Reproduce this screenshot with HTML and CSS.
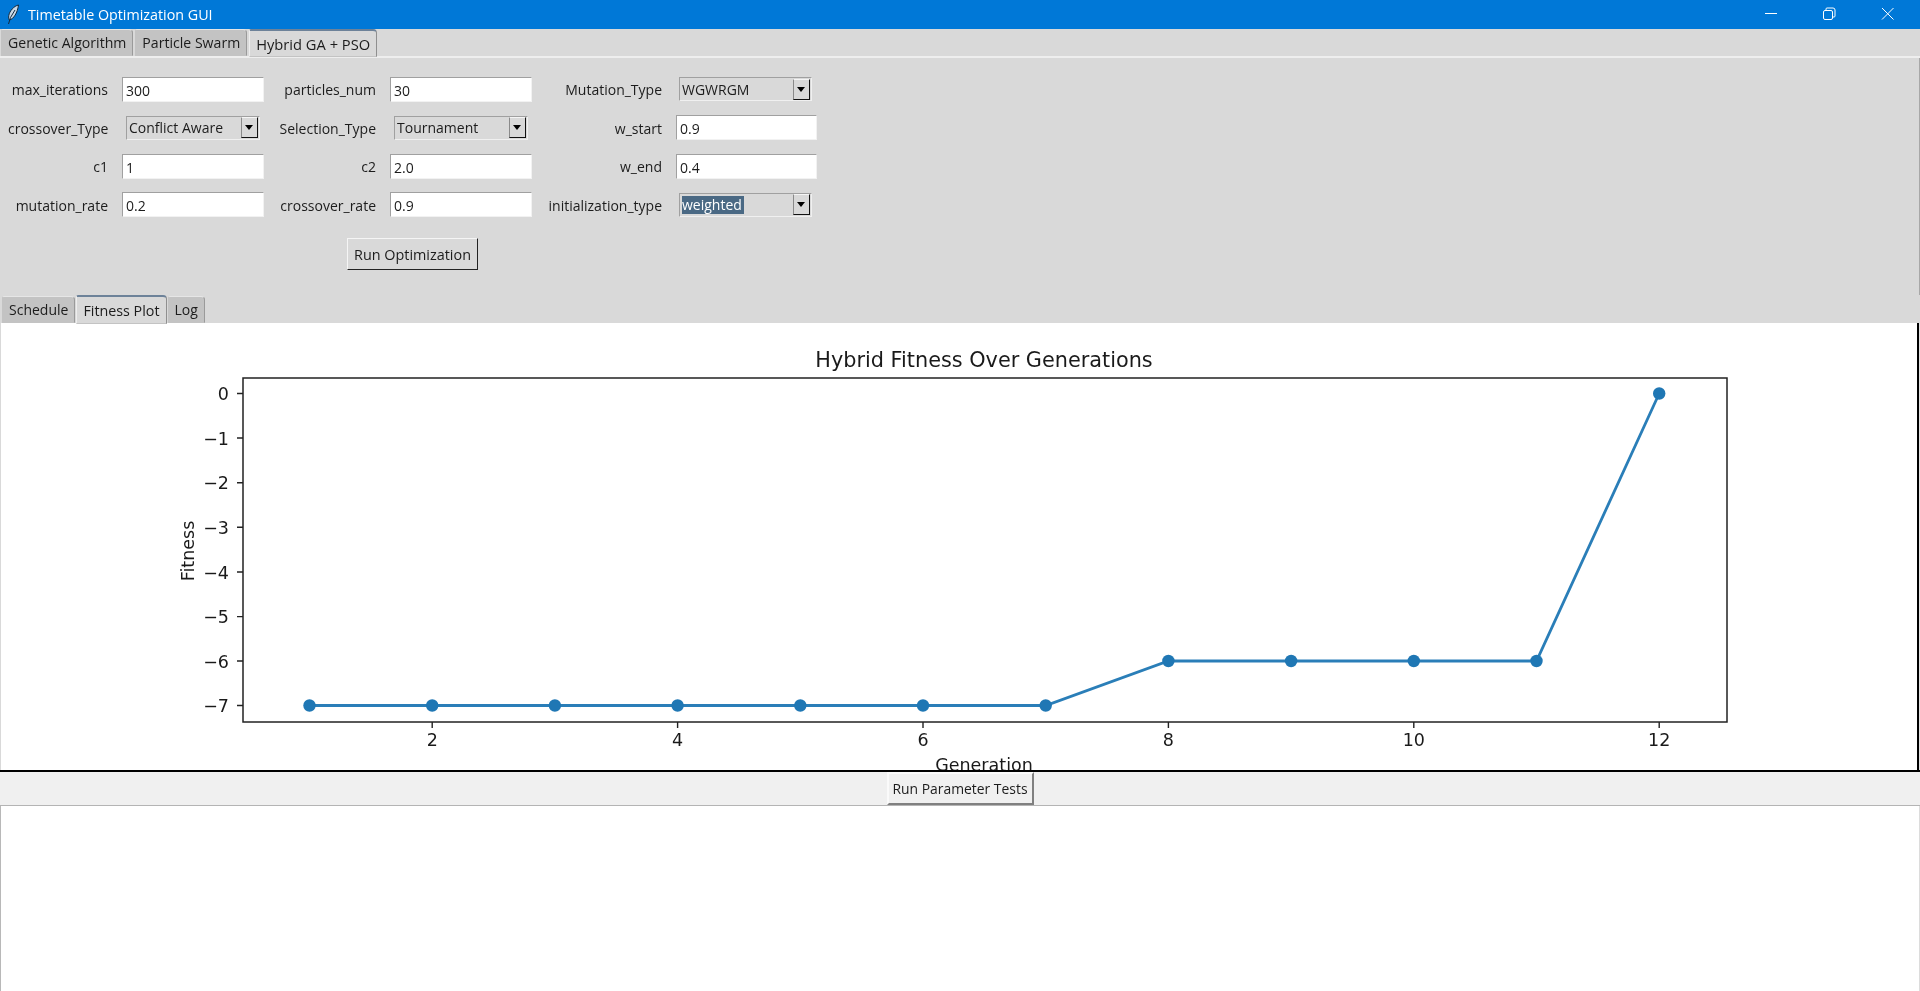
FILE: index.html
```html
<!DOCTYPE html>
<html lang="en">
<head>
<meta charset="utf-8">
<title>Timetable Optimization GUI</title>
<link rel="stylesheet" href="styles.css">
</head>
<body>
<div class="window">
  <header class="titlebar">
    <svg class="app-icon" width="16" height="22" viewBox="0 0 16 22"><path class="feather" d="M12.500 1C8 2 3.500 7 2.800 11.500c-.3 2 0 4 .7 4.500C7.500 15 11.500 9 12.500 1Z"/><path class="quill" d="M9 6 4.500 13.500 2.500 20"/></svg>
    <span class="title-text">Timetable Optimization GUI</span>
    <div class="win-controls">
      <svg class="win-btn" width="58" height="29" viewBox="0 0 58 29"><path class="win-line" d="M23 13.500h12"/></svg>
      <svg class="win-btn" width="58" height="29" viewBox="0 0 58 29"><path class="win-line" d="M26 10.500v-1.500a1 1 0 0 1 1-1h6a2 2 0 0 1 2 2v6a1 1 0 0 1-1 1h-1"/><rect class="win-line" x="23.500" y="10.500" width="9" height="9" rx="1.500"/></svg>
      <svg class="win-btn" width="58" height="29" viewBox="0 0 58 29"><path class="win-line" d="M24 8l11.500 11.500M35.500 8 24 19.500"/></svg>
    </div>
  </header>

  <nav class="tabs tabs-top">
    <div class="tab">Genetic Algorithm</div>
    <div class="tab">Particle Swarm</div>
    <div class="tab tab-active">Hybrid GA + PSO</div>
  </nav>

  <section class="panel">
    <form class="form-grid">
      <label class="field-label">max_iterations</label>
      <div class="entry">300</div>
      <label class="field-label">particles_num</label>
      <div class="entry">30</div>
      <label class="field-label">Mutation_Type</label>
      <div class="combo combo-c"><span class="combo-value">WGWRGM</span><span class="combo-arrow"></span></div>

      <label class="field-label">crossover_Type</label>
      <div class="combo combo-a"><span class="combo-value">Conflict Aware</span><span class="combo-arrow"></span></div>
      <label class="field-label">Selection_Type</label>
      <div class="combo combo-a"><span class="combo-value">Tournament</span><span class="combo-arrow"></span></div>
      <label class="field-label">w_start</label>
      <div class="entry">0.9</div>

      <label class="field-label">c1</label>
      <div class="entry">1</div>
      <label class="field-label">c2</label>
      <div class="entry">2.0</div>
      <label class="field-label">w_end</label>
      <div class="entry">0.4</div>

      <label class="field-label">mutation_rate</label>
      <div class="entry">0.2</div>
      <label class="field-label">crossover_rate</label>
      <div class="entry">0.9</div>
      <label class="field-label">initialization_type</label>
      <div class="combo combo-c"><span class="combo-value"><span class="selected">weighted</span></span><span class="combo-arrow"></span></div>

      <div class="run-row"><button type="button" class="btn btn-run">Run Optimization</button></div>
    </form>
  </section>

  <nav class="tabs tabs-sub">
    <div class="tab">Schedule</div>
    <div class="tab tab-active">Fitness Plot</div>
    <div class="tab">Log</div>
  </nav>

  <main class="plot">
    <svg class="chart" width="1916" height="447" viewBox="0 0 1916 447">
      <text class="chart-title" x="983" y="44">Hybrid Fitness Over Generations</text>
      <rect class="axes" x="242" y="55" width="1484" height="344"/>

      <g class="ticks">
        <path d="M431.200 399v6M676.600 399v6M922 399v6M1167.400 399v6M1412.800 399v6M1658.200 399v6"/>
        <path d="M236 382.500h6M236 338h6M236 293.600h6M236 249h6M236 204.300h6M236 159.700h6M236 115h6M236 70.500h6"/>
      </g>

      <g class="tick-x">
        <text x="431.200" y="423">2</text>
        <text x="676.600" y="423">4</text>
        <text x="922" y="423">6</text>
        <text x="1167.400" y="423">8</text>
        <text x="1412.800" y="423">10</text>
        <text x="1658.200" y="423">12</text>
      </g>
      <g class="tick-y">
        <text x="228" y="389">−7</text>
        <text x="228" y="344.500">−6</text>
        <text x="228" y="300">−5</text>
        <text x="228" y="255.500">−4</text>
        <text x="228" y="210.800">−3</text>
        <text x="228" y="166.200">−2</text>
        <text x="228" y="121.500">−1</text>
        <text x="228" y="77">0</text>
      </g>

      <text class="axis-label" x="983" y="448">Generation</text>
      <text class="axis-label" transform="translate(193 228) rotate(-90)">Fitness</text>

      <polyline class="series" points="308.500,382.500 431.200,382.500 553.900,382.500 676.600,382.500 799.300,382.500 922,382.500 1044.700,382.500 1167.400,338 1290.100,338 1412.800,338 1535.500,338 1658.200,70.500"/>
      <g class="markers">
        <circle cx="308.500" cy="382.500" r="6.200"/><circle cx="431.200" cy="382.500" r="6.200"/><circle cx="553.900" cy="382.500" r="6.200"/><circle cx="676.600" cy="382.500" r="6.200"/><circle cx="799.300" cy="382.500" r="6.200"/><circle cx="922" cy="382.500" r="6.200"/><circle cx="1044.700" cy="382.500" r="6.200"/><circle cx="1167.400" cy="338" r="6.200"/><circle cx="1290.100" cy="338" r="6.200"/><circle cx="1412.800" cy="338" r="6.200"/><circle cx="1535.500" cy="338" r="6.200"/><circle cx="1658.200" cy="70.500" r="6.200"/>
      </g>
    </svg>
  </main>

  <div class="test-bar"><button type="button" class="btn btn-test">Run Parameter Tests</button></div>
  <div class="output"></div>
</div>
</body>
</html>
```

FILE: styles.css
```css
* { box-sizing: border-box; }
html, body { margin: 0; padding: 0; height: 100%; overflow: hidden; }
body { font-family: "Open Sans", "Noto Sans", "Liberation Sans", sans-serif; font-size: 14px; color: #1c1c1c; background: #fff; }

.window { height: 991px; display: flex; flex-direction: column; background: #e2e2e2; filter: blur(0.3px); }

/* title bar */
.titlebar { height: 29px; flex: none; background: #0078d7; color: #fff; display: flex; align-items: center; padding-left: 6px; }
.app-icon { flex: none; margin-right: 6px; }
.feather { fill: #c9d9e8; stroke: #12283c; stroke-width: 1; }
.quill { fill: none; stroke: #12283c; stroke-width: 1; }
.title-text { font-size: 14.300px; }
.win-controls { margin-left: auto; display: flex; padding-right: 4px; }
.win-btn { display: block; }
.win-line { fill: none; stroke: #fff; stroke-width: 1; }

/* tabs */
.tabs { flex: none; display: flex; background: #d9d9d9; align-items: flex-end; }
.tabs-top { height: 29px; padding-left: 1px; border-bottom: 2px solid #eeeeee; }
.tabs-sub { height: 28px; padding-left: 2px; }
.tab { background: #c3c3c3; border: 1px solid #c3c3c3; border-top-color: #e6e6e6; border-right: 1px solid #9a9a9a; border-top-right-radius: 4px; border-top-left-radius: 2px; display: flex; align-items: center; white-space: nowrap; }
.tabs-top .tab { height: 27px; margin-right: 2px; padding: 0 6px; font-size: 14.100px; }
.tabs-sub .tab { height: 27px; margin-right: 1px; padding: 0 6px; font-size: 14px; }
.tab-active { background: #d9d9d9; border-top: 2px solid #6d8299; border-left-color: #eee; border-right-color: #8f8f8f; position: relative; margin-bottom: -1px; }
.tabs-top .tab-active { height: 28px; font-size: 14.700px; }
.tabs-sub .tab-active { height: 29px; font-size: 14.300px; }

/* form */
.panel { flex: none; background: #d9d9d9; padding: 12px 0 11px 8px; border-right: 1px solid #a8a8a8; }
.form-grid { display: grid; width: 809px; grid-template-columns: 114px 142px 126px 142px 144px 141px; grid-template-rows: repeat(4, 38.500px) 60px; align-items: center; }
.field-label { text-align: right; padding: 1px 14px 0 0; white-space: nowrap; }
.entry { height: 25px; background: #fff; border: 1px solid; border-color: #a0a0a0 #f2f2f2 #f2f2f2 #a0a0a0; padding: 1px 3px 0; line-height: 23px; }
.combo { height: 24px; display: flex; align-items: center; justify-content: space-between; background: #d9d9d9; border: 1px solid; border-color: #a0a0a0 #f0f0f0 #f0f0f0 #a0a0a0; padding: 0 1px 0 2px; justify-self: center; }
.combo-a { width: 134px; }
.combo-c { width: 133px; margin-right: 2px; }
.combo-value { line-height: 18px; padding-top: 1px; }
.selected { background: #4a6984; color: #fff; display: inline-block; padding-right: 2px; }
.combo-arrow { width: 17px; height: 21px; flex: none; background: #d9d9d9; border: 1px solid; border-color: #f5f5f5 #111 #111 #8a8a8a; position: relative; }
.combo-arrow::after { content: ""; position: absolute; left: 3px; top: 7px; border-left: 4px solid transparent; border-right: 4px solid transparent; border-top: 5px solid #000; }

.run-row { grid-column: 1 / -1; height: 60px; display: flex; align-items: center; justify-content: center; }

.btn { font: inherit; color: #1c1c1c; padding: 0; cursor: default; }
.btn-run { width: 131px; height: 32px; background: #d9d9d9; border: 1px solid; border-color: #f5f5f5 #222 #222 #f5f5f5; font-size: 14.400px; }
.btn-test { width: 147px; height: 33px; background: #f0f0f0; border: 2px solid; border-color: #fafafa #808080 #808080 #fafafa; font-size: 13.900px; }

/* plot */
.plot { flex: none; height: 447px; margin-right: 1px; background: #fff; overflow: hidden; border-left: 1px solid #d9d9d9; border-right: 2px solid #000; }
.chart { display: block; font-family: "DejaVu Sans", sans-serif; }
.chart-title { font-size: 20.800px; text-anchor: middle; fill: #1a1a1a; }
.axis-label { font-size: 17.500px; text-anchor: middle; fill: #1a1a1a; }
.axes { fill: #fff; stroke: #222; stroke-width: 1.500; }
.ticks path { stroke: #222; stroke-width: 1.400; fill: none; }
.tick-x text { font-size: 17.500px; text-anchor: middle; fill: #1a1a1a; }
.tick-y text { font-size: 17.500px; text-anchor: end; fill: #1a1a1a; }
.series { fill: none; stroke: #1f77b4; stroke-width: 2.800; opacity: 0.95; }
.markers circle { fill: #1f77b4; }

/* bottom */
.test-bar { flex: none; height: 36px; background: #f0f0f0; border-top: 2px solid #000; border-bottom: 1px solid #b4b4b4; display: flex; justify-content: center; align-items: flex-start; }
.output { flex: 1; background: #fff; border-left: 1px solid #b8b8b8; border-right: 1px solid #dcdcdc; }
```
